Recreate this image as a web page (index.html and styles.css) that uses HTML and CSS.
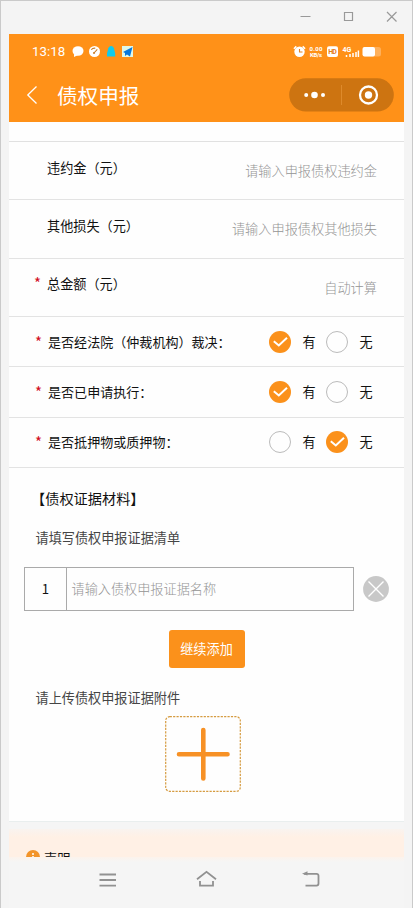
FILE: index.html
```html
<!DOCTYPE html>
<html lang="zh-CN">
<head>
<meta charset="utf-8">
<title>债权申报</title>
<link rel="stylesheet" href="styles.css">
</head>
<body>
<div class="window">
  <div class="window-bar">
    <svg width="110" height="32" viewBox="294 2 110 32" fill="none" stroke="#999" stroke-width="1.2"><path d="M300.500 16.500h10M344.500 12.500h8v8h-8zM387 12l9.500 9.500M396.500 12L387 21.500"/></svg>
  </div>
  <div class="screen">
    <header class="header">
      <div class="status">
        <span class="time">13:18</span>
        <svg class="status-left" width="64" height="14" viewBox="71 45 64 14">
          <ellipse cx="78" cy="51" rx="5.500" ry="4.800" fill="#fff"/><path d="M74 54v3l4-2z" fill="#fff"/>
          <circle cx="94.500" cy="51.500" r="5.500" fill="#fff"/><path d="M91.300 49.800a4 3 0 0 1 4-1.600M94 53l3.300-3.600" stroke="#c77b27" stroke-width="1.100" fill="none"/><circle cx="94" cy="53" r="1" fill="#c77b27"/>
          <path d="M107 56.500v-3c0-1 .6-2 .8-3 0-6 6.600-6 6.600 0 .2 1 .8 2 .8 3v3z" fill="#10cbed"/>
          <rect x="122" y="46" width="11" height="11" fill="#dff8e9"/><path d="M123 52l9.500-5-2.500 9.500-3-2-2 1.500v-3z" fill="#0878de"/>
        </svg>
        <svg class="status-right" width="90" height="14" viewBox="292 45 90 14">
          <circle cx="299.500" cy="51.800" r="5.200" fill="#fff"/><path d="M293.900 48.800l2.400-2.400M302.700 46.400l2.400 2.400" stroke="#fff" stroke-width="1.500"/><path d="M299.500 49v3h3" fill="none" stroke="#e58220" stroke-width="1.100"/>
          <g class="tiny"><text x="309.500" y="51" textLength="13">0.00</text><text x="310" y="57" textLength="12">KB/s</text></g>
          <rect x="327" y="46.200" width="11" height="10.800" rx="2" fill="#fff"/><text class="hd" x="328.200" y="54.300" textLength="8.600">HD</text>
          <text class="network" x="342.500" y="51.800">4G</text>
          <path d="M346.500 55v2M350 54v3M353 53v4M356 52v5M358.400 50.500V57" stroke="#fff" stroke-width="1.500"/>
          <rect x="363" y="47" width="18" height="9.500" rx="2.500" fill="#ffb05a"/><rect x="362.500" y="47" width="12.500" height="9.500" rx="2" fill="#fff"/>
        </svg>
      </div>
      <div class="nav">
        <svg class="back" width="12" height="20" viewBox="0 0 12 20" fill="none" stroke="#fff" stroke-width="1.300"><path d="M10.500 1.500L1.800 10l8.700 8.500"/></svg>
        <h1 class="title">债权申报</h1>
        <svg class="capsule" width="105" height="34" viewBox="0 0 105 34"><rect x=".2" y=".3" width="104.600" height="33.200" rx="16.600" fill="#cd7411"/><g fill="#fff"><circle cx="17.200" cy="17" r="2"/><circle cx="25.500" cy="17" r="3.300"/><circle cx="34" cy="17" r="2"/><circle cx="79.500" cy="17" r="3.700"/></g><path d="M52.500 7v20" stroke="#de8a2b"/><circle cx="79.500" cy="17" r="8.500" fill="none" stroke="#fff" stroke-width="2.300"/></svg>
      </div>
    </header>
    <main class="form">
      <div class="gap-row"></div>
      <div class="row money"><span class="star"></span><span class="label">违约金（元）</span><span class="hint">请输入申报债权违约金</span></div>
      <div class="row money"><span class="star"></span><span class="label">其他损失（元）</span><span class="hint">请输入申报债权其他损失</span></div>
      <div class="row money"><span class="star">*</span><span class="label">总金额（元）</span><span class="hint">自动计算</span></div>
      <div class="row choice"><span class="star">*</span><span class="label">是否经法院（仲裁机构）裁决：</span><span class="radio on"><svg viewBox="0 0 22 22"><path d="M4.800 10.300l5 4.200L18 6.800"/></svg></span><span class="option">有</span><span class="radio"></span><span class="option">无</span></div>
      <div class="row choice"><span class="star">*</span><span class="label">是否已申请执行：</span><span class="radio on"><svg viewBox="0 0 22 22"><path d="M4.800 10.300l5 4.200L18 6.800"/></svg></span><span class="option">有</span><span class="radio"></span><span class="option">无</span></div>
      <div class="row choice"><span class="star">*</span><span class="label">是否抵押物或质押物：</span><span class="radio"></span><span class="option">有</span><span class="radio on"><svg viewBox="0 0 22 22"><path d="M4.800 10.300l5 4.200L18 6.800"/></svg></span><span class="option">无</span></div>
      <section class="evidence">
        <h2 class="heading">【债权证据材料】</h2>
        <p class="instruction">请填写债权申报证据清单</p>
        <div class="entry">
          <div class="field"><span class="number">1</span><span class="placeholder">请输入债权申报证据名称</span></div>
          <svg class="remove" width="26" height="26" viewBox="0 0 26 26"><circle cx="13" cy="13" r="12.900" fill="#c8c8c8"/><path d="M5.500 5.500l15 15M20.500 5.500l-15 15" stroke="#fff" stroke-width="1.400"/></svg>
        </div>
        <div class="add">继续添加</div>
        <p class="instruction upload-label">请上传债权申报证据附件</p>
        <svg class="upload" width="76" height="76" viewBox="0 0 76 76" fill="none"><rect x=".7" y=".7" width="74.600" height="74.600" rx="4" stroke="#d59b40" stroke-width="1.200" stroke-dasharray="2.200 1.200"/><path d="M38.300 14v48.500M14 38.300h48.500" stroke="#f79125" stroke-width="4.600" stroke-linecap="round"/></svg>
      </section>
    </main>
    <div class="statement"><svg width="14" height="14" viewBox="0 0 14 14"><circle cx="7" cy="7" r="7" fill="#f2942a"/><path d="M7 3v2M7 6v5" stroke="#fff" stroke-width="1.500"/></svg><span>声明</span></div>
  </div>
  <footer class="system-nav">
    <svg width="230" height="24" viewBox="95 868 230 24" fill="none" stroke="#919191" stroke-width="1.800"><path d="M99.500 874.500h16.500M99.500 880h16.500M99.500 885.700h16.500M197 879.300l9.500-7.500 9.500 7.500M200 881v4.700h13V881M304 873.800h12.500q2 0 2 2v7.800q0 2-2 2h-11"/><path d="M307.500 871.300v4.200l-5.500-1.700z" fill="#919191" stroke="none"/></svg>
  </footer>
</div>
</body>
</html>
```
FILE: styles.css
```css
* { box-sizing: border-box; }
body { margin: 0; font-family: "Noto Sans CJK SC", sans-serif; font-size: 13.15px; color: #111; background: #f4f4f4; }
h1, h2, p { margin: 0; font-weight: 400; }
svg { display: block; flex: none; }
.window { height: 908px; overflow: hidden; display: flex; flex-direction: column; padding: 0 8px; border-left: 1px solid #cacaca; border-right: 1px solid #cacaca; border-top: 1px solid #cacaca; background: #f4f4f4; }
.window-bar { height: 33px; flex: none; display: flex; justify-content: flex-end; padding-top: 1px; }
.screen { width: 395px; height: 823px; flex: none; overflow: hidden; background: #f5f5f5; }
.header { height: 88px; background: #ff9118; color: #fff; }
.status { height: 34px; display: flex; align-items: center; padding: 2px 22px 0 23px; }
.time { width: 39px; font: 13.3px/16px Roboto, sans-serif; }
.status-right { margin-left: auto; }
.tiny { font: 700 6px Roboto, sans-serif; fill: #fff; }
.hd { font: 700 7px Roboto, sans-serif; fill: #e67d19; }
.network { font: 700 7px Roboto, sans-serif; fill: #fff; }
.nav { height: 54px; display: flex; align-items: center; padding: 0 10px 1px 17px; }
.title { margin-left: 19px; font-size: 20.6px; line-height: 30px; }
.capsule { margin-left: auto; }
.form { height: 700px; background: #fefefe; border-bottom: 1px solid #e9eeee; }
.gap-row { height: 20px; border-bottom: 1px solid #e1e1e1; }
.row { display: flex; align-items: center; border-bottom: 1px solid #e3e3e3; }
.money { height: 58.3px; padding: 0 27px 0 25px; }
.star { width: 13px; flex: none; color: #d10c21; font: 15px/20px "Noto Sans CJK SC", sans-serif; }
.label { flex: 1; white-space: nowrap; line-height: 20px; }
.money .label { margin-bottom: 6px; }
.money .star { margin-bottom: 8px; }
.hint { color: #949494; font-weight: 300; font-size: 13.2px; line-height: 20px; margin-top: 1px; }
.choice { height: 50.4px; padding: 0 31px 0 26px; }
.choice .label { font-size: 13.05px; }
.radio { width: 22px; height: 22px; flex: none; border: 1px solid #bbb; border-radius: 50%; }
.radio.on { border: 0; background: #fb911b; }
.radio svg { width: 22px; height: 22px; fill: none; stroke: #fff; stroke-width: 2; }
.option { width: 35px; padding-left: 11.5px; line-height: 20px; }
.option:last-child { width: 25px; }
.evidence { display: flex; flex-direction: column; }
.heading { margin: 19px 0 0 22px; font-size: 14.2px; line-height: 22px; }
.instruction { margin: 19px 0 0 26.5px; color: #454545; line-height: 20px; }
.entry { display: flex; align-items: center; margin: 19px 0 0 15px; }
.field { display: flex; width: 330px; height: 44px; border: 1px solid #aaa; line-height: 42px; }
.number { width: 42px; text-align: center; border-right: 1px solid #aaa; }
.placeholder { padding-left: 4.5px; color: #949494; font-weight: 300; }
.remove { margin-left: 9px; }
.add { width: 76px; height: 38px; margin: 19px 0 0 159.5px; background: #fb911b; color: #fff; border-radius: 3px; text-align: center; line-height: 38px; }
.upload-label { margin-top: 20px; }
.upload { margin: 8px 0 0 155.5px; }
.statement { display: flex; gap: 4px; align-items: flex-start; height: 28px; margin-top: 7px; padding: 21px 0 0 17px; background: linear-gradient(#f9f3ef, #fff0e5 8px); }
.statement span { line-height: 20px; margin-top: -1px; }
.system-nav { flex: 1; padding: 11px 0 0 86px; background: linear-gradient(#fcf3ec, #f5f5f5 5px); }
```
